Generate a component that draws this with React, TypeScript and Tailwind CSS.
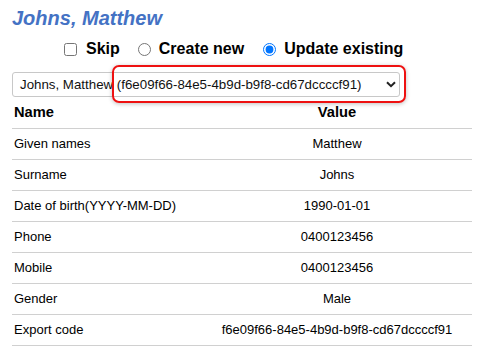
import React from "react";

const rows: [string, string][] = [
  ["Given names", "Matthew"],
  ["Surname", "Johns"],
  ["Date of birth(YYYY-MM-DD)", "1990-01-01"],
  ["Phone", "0400123456"],
  ["Mobile", "0400123456"],
  ["Gender", "Male"],
  ["Export code", "f6e09f66-84e5-4b9d-b9f8-cd67dccccf91"],
];

export default function App() {
  return (
    <div
      className="w-[479px] h-[351px] bg-white overflow-hidden text-black"
      style={{ fontFamily: '"Liberation Sans", Arial, sans-serif' }}
    >
      <h1 className="pl-[12px] pt-[7px] text-[20px] leading-[23px] font-bold italic text-[#4472c4]">
        Johns, Matthew
      </h1>
      <div className="mt-[9px] h-[20px] flex items-center text-[16px] font-bold">
        <input type="checkbox" className="ml-[64px] m-0 w-[13px] h-[13px]" readOnly />
        <span className="ml-[9px]">Skip</span>
        <input type="radio" name="opt" className="ml-[18px] m-0 w-[13px] h-[13px]" readOnly />
        <span className="ml-[8px]">Create new</span>
        <input type="radio" name="opt" defaultChecked className="ml-[19px] m-0 w-[13px] h-[13px]" />
        <span className="ml-[8px]">Update existing</span>
      </div>
      <div className="relative mt-[13px] ml-[12px]">
        <div className="w-[388px] h-[25px] border border-[#c8c8c8] rounded-[3px] flex items-center pl-[7px] pr-[3px] text-[13.3px] text-[#111]">
          <span className="flex-1 whitespace-nowrap">
            Johns, Matthew (f6e09f66-84e5-4b9d-b9f8-cd67dccccf91)
          </span>
          <svg width="10" height="7" viewBox="0 0 10 7">
            <path d="M1 1.2 L5 5.2 L9 1.2" fill="none" stroke="#222" strokeWidth="2" />
          </svg>
        </div>
        <div className="absolute left-[100px] top-[-7px] w-[294px] h-[38px] border-2 border-[#ee1111] rounded-[7px] shadow-[0_1px_4px_rgba(0,0,0,0.25)]" />
      </div>
      <table className="ml-[12px] w-[460px] border-collapse text-[13px]">
        <thead>
          <tr className="h-[31px] border-b border-[#d0d0d0]">
            <th className="w-[190px] text-left pl-[2px] text-[14.7px] font-bold p-0">Name</th>
            <th className="text-center text-[14.7px] font-bold p-0">Value</th>
          </tr>
        </thead>
        <tbody>
          {rows.map(([n, v]) => (
            <tr key={n} className="h-[31px] border-b border-[#d0d0d0]">
              <td className="pl-[2px] p-0">{n}</td>
              <td className="text-center p-0">{v}</td>
            </tr>
          ))}
        </tbody>
      </table>
    </div>
  );
}
